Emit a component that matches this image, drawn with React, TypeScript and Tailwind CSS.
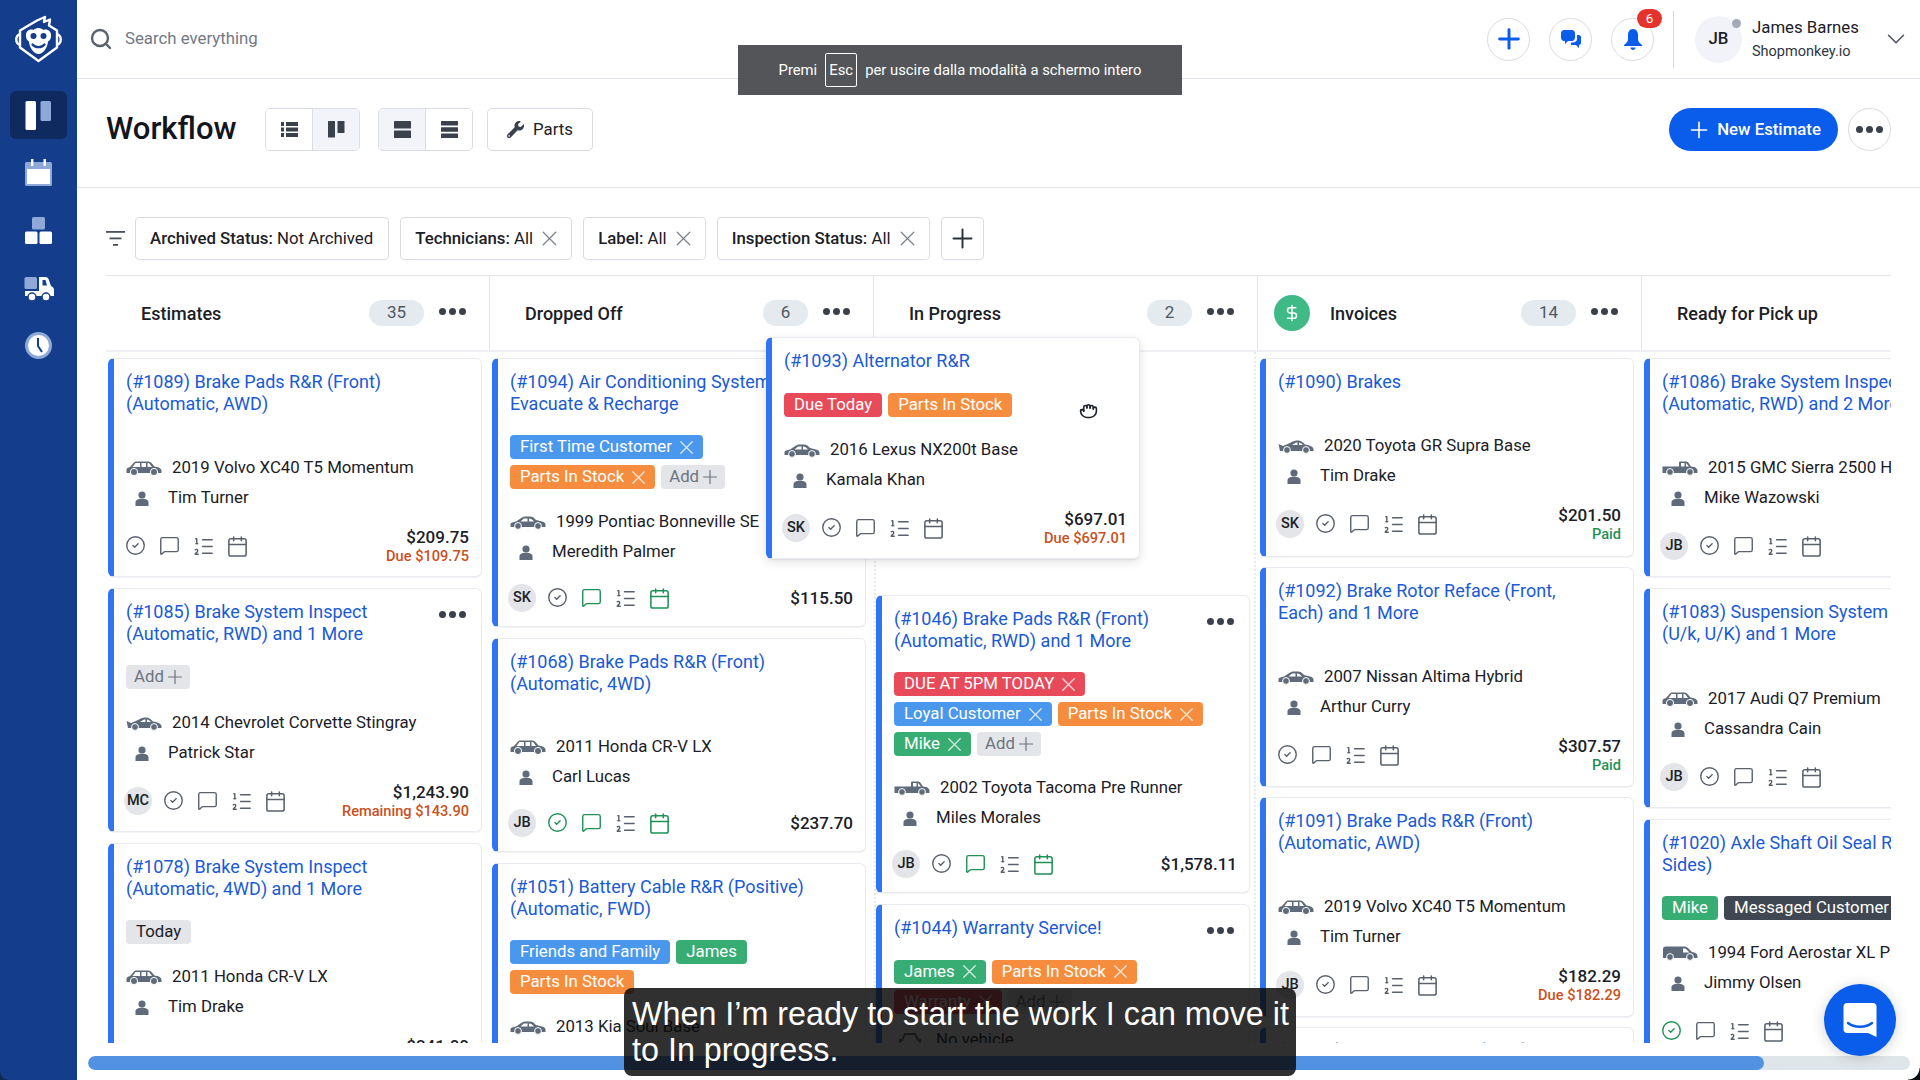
import React from "react";
import { Search, Plus, X, ChevronDown, CircleCheck, MessageSquare, ListOrdered, Calendar, Grab, DollarSign } from "lucide-react";
import { FaWrench } from "react-icons/fa";

const INK = "text-[#1b2027]";

function Logo() {
  return (
    <svg width="49" height="48" viewBox="0 0 49 48" fill="none">
      <path d="M23 5.5 L31 2 L30 7 L36 4.5 L35 10.5 L43 15.5 V32.5 L24.5 46 L6 32.5 V15.5 Z" stroke="#fff" strokeWidth="2.4" strokeLinejoin="round" />
      <path d="M24.5 13 C27 13 28.5 14 29.5 15 C33.5 13.5 37.5 16.5 37 21 C37 23.5 36 25.5 34 26.5 C33.5 33 29 39 24.5 39 C20 39 15.5 33 15 26.5 C13 25.5 12 23.5 12 21 C11.5 16.5 15.5 13.5 19.5 15 C20.5 14 22 13 24.5 13 Z" fill="#fff" />
      <path d="M6 19 C1 21 1 28 6 30 M43 19 C48 21 48 28 43 30" stroke="#fff" strokeWidth="2.4" />
      <circle cx="19.5" cy="21" r="3" fill="#143e8c" />
      <circle cx="29.5" cy="21" r="3" fill="#143e8c" />
      <path d="M18.5 29.5 C21 33 28 33 30.5 29.5" stroke="#143e8c" strokeWidth="2.2" strokeLinecap="round" />
    </svg>
  );
}

const L = "#8ea8d8";
function NavBoard() {
  return (
    <svg width="27" height="29" viewBox="0 0 27 29">
      <rect x="0.5" y="0" width="10.5" height="29" rx="1.5" fill="#fff" />
      <rect x="15.5" y="0" width="10.5" height="20" rx="1.5" fill={L} />
    </svg>
  );
}
function NavCal() {
  return (
    <svg width="27" height="27" viewBox="0 0 27 27">
      <rect x="0" y="3" width="27" height="24" rx="1.5" fill={L} />
      <rect x="2" y="10" width="23" height="15" fill="#fff" />
      <rect x="6" y="0" width="2.4" height="7" fill="#fff" />
      <rect x="18.5" y="0" width="2.4" height="7" fill="#fff" />
    </svg>
  );
}
function NavBlocks() {
  return (
    <svg width="27" height="27" viewBox="0 0 27 27">
      <rect x="7" y="0" width="13" height="12.5" rx="1.5" fill={L} />
      <rect x="0" y="14.5" width="12.5" height="12.5" rx="1.5" fill="#fff" />
      <rect x="14.5" y="14.5" width="12.5" height="12.5" rx="1.5" fill="#fff" />
    </svg>
  );
}
function NavTruck() {
  return (
    <svg width="30" height="25" viewBox="0 0 30 25" className="mt-[3px]">
      <rect x="0.5" y="0" width="12.5" height="12" rx="1.5" fill={L} />
      <path d="M15 0 H22 C23 0 24 1 24.5 2 L27 9 C29 10 30 11 30 13 V19 H1 V14 H15 Z" fill="#fff" />
      <path d="M18.5 3 H21.5 L23 8.5 H18.5 Z" fill="#143e8c" />
      <circle cx="8" cy="20" r="4" fill="#fff" stroke="#143e8c" strokeWidth="1.5" />
      <circle cx="22" cy="20" r="4" fill="#fff" stroke="#143e8c" strokeWidth="1.5" />
    </svg>
  );
}
function NavClock() {
  return (
    <svg width="27" height="27" viewBox="0 0 27 27">
      <circle cx="13.5" cy="13.5" r="13.5" fill={L} />
      <circle cx="13.5" cy="13.5" r="10.5" fill="#fff" />
      <path d="M13 6 V14 L17 20" stroke="#143e8c" strokeWidth="2" fill="none" />
    </svg>
  );
}

function Suv() {
  return (
    <svg width="36" height="15" viewBox="0 0 36 15" className="shrink-0">
      <path d="M0.5 9 C0.5 7 2 6.5 4 6 L8 1.5 C8.5 0.7 9.5 0.5 10.5 0.5 H22 C23.5 0.5 24.5 1 25.5 2 L28.5 5.5 C32 6 35.5 7 35.5 10 V12 H0.5 Z" fill="#5f6b7a" />
      <path d="M6.5 6 L9.5 2 H14 V6 Z M15.5 2 H20 V6 H15.5 Z M21.5 2 H23 L26 6 H21.5 Z" fill="#fff" />
      <circle cx="8" cy="11" r="3.6" fill="#5f6b7a" stroke="#fff" strokeWidth="1" />
      <circle cx="28" cy="11" r="3.6" fill="#5f6b7a" stroke="#fff" strokeWidth="1" />
    </svg>
  );
}
function Sedan() {
  return (
    <svg width="36" height="15" viewBox="0 0 36 15" className="shrink-0">
      <path d="M0.5 9 C1 7.5 3 7 6 6.5 L12 2.5 C13 2 14 1.5 16 1.5 H20 C22 1.5 24 2.5 26 5 L32 6.5 C34.5 7 35.5 8 35.5 10 V12 H0.5 Z" fill="#5f6b7a" />
      <path d="M10.5 6.5 L14 3.5 H17.5 V6.5 Z M19 3.5 C21 3.5 22.5 4.5 24 6.5 H19 Z" fill="#fff" />
      <circle cx="8" cy="11" r="3.4" fill="#5f6b7a" stroke="#fff" strokeWidth="1" />
      <circle cx="28" cy="11" r="3.4" fill="#5f6b7a" stroke="#fff" strokeWidth="1" />
    </svg>
  );
}
function Coupe() {
  return (
    <svg width="36" height="15" viewBox="0 0 36 15" className="shrink-0">
      <path d="M0.5 5 L5 7 L12 4 C15 2 18 1.5 20 1.5 C23 1.5 25 3.5 27 5.5 C31 6 35 7.5 35.5 10 V12 H2 Z" fill="#5f6b7a" />
      <path d="M14 6 L18 3.5 H19.5 V6 Z M21 3.5 C22.5 3.5 23.5 4.5 25 6 H21 Z" fill="#fff" />
      <circle cx="9" cy="11" r="3.4" fill="#5f6b7a" stroke="#fff" strokeWidth="1" />
      <circle cx="28" cy="11" r="3.4" fill="#5f6b7a" stroke="#fff" strokeWidth="1" />
    </svg>
  );
}
function Pickup() {
  return (
    <svg width="36" height="15" viewBox="0 0 36 15" className="shrink-0">
      <path d="M0.5 5.5 H17 V1.5 C17 1 17.5 0.5 18 0.5 H24 C25 0.5 26 1 27 2.5 L29 5.5 C33 6 35.5 7 35.5 10 V12 H0.5 Z" fill="#5f6b7a" />
      <path d="M19 2 H22.5 V5.5 H19 Z M24 2 L27 5.5 H24 Z" fill="#fff" />
      <circle cx="8" cy="11" r="3.4" fill="#5f6b7a" stroke="#fff" strokeWidth="1" />
      <circle cx="28" cy="11" r="3.4" fill="#5f6b7a" stroke="#fff" strokeWidth="1" />
    </svg>
  );
}
function Van() {
  return (
    <svg width="36" height="15" viewBox="0 0 36 15" className="shrink-0">
      <path d="M1 12 V3 C1 1.5 2 0.5 4 0.5 H22 C24 0.5 25 1 27 3 L30 6 C33 6.5 35.5 7.5 35.5 10 V12 Z" fill="#5f6b7a" />
      <path d="M21 2.5 H23.5 L27.5 6.5 H21 Z" fill="#fff" />
      <circle cx="8" cy="11" r="3.4" fill="#5f6b7a" stroke="#fff" strokeWidth="1" />
      <circle cx="28" cy="11" r="3.4" fill="#5f6b7a" stroke="#fff" strokeWidth="1" />
    </svg>
  );
}
function NoVehicle() {
  return (
    <svg width="32" height="15" viewBox="0 0 32 15" className="shrink-0">
      <path d="M11 1 H21 L24 7 H26 V14 H6 V7 H8 Z" fill="none" stroke="#5f6b7a" strokeWidth="2" />
    </svg>
  );
}
const cars: Record<string, () => React.ReactElement> = { suv: Suv, sedan: Sedan, coupe: Coupe, pickup: Pickup, van: Van, none: NoVehicle };

function Person() {
  return (
    <svg width="14" height="15" viewBox="0 0 14 15" className="shrink-0">
      <circle cx="7" cy="4" r="3.6" fill="#5f6b7a" />
      <path d="M0.5 15 V11.5 C0.5 9 3 7.8 7 7.8 C11 7.8 13.5 9 13.5 11.5 V15 Z" fill="#5f6b7a" />
    </svg>
  );
}

function Dots({ className = "" }: { className?: string }) {
  return (
    <div className={`flex items-center gap-[3px] shrink-0 ${className}`}>
      <span className="w-[7px] h-[7px] rounded-full bg-[#3a414c]" />
      <span className="w-[7px] h-[7px] rounded-full bg-[#3a414c]" />
      <span className="w-[7px] h-[7px] rounded-full bg-[#3a414c]" />
    </div>
  );
}

const tagColors: Record<string, string> = {
  blue: "bg-[#4a97ee] text-white",
  orange: "bg-[#f68d3e] text-white",
  red: "bg-[#e94a5a] text-white",
  green: "bg-[#37ad74] text-white",
  dark: "bg-[#3f4753] text-white",
  gray: "bg-[#e3e5e8] text-[#1b2027]",
};

function Tag({ label, color, x }: { label: string; color: string; x?: boolean }) {
  return (
    <span className={`h-[24px] rounded-[4px] px-[10px] flex items-center gap-[8px] text-[16.8px] whitespace-nowrap shrink-0 ${tagColors[color]}`}>
      {label}
      {x && <X size={23} strokeWidth={1.3} className="opacity-80 -mx-[5px]" />}
    </span>
  );
}
function AddTag() {
  return (
    <span className="h-[24px] rounded-[4px] px-[8px] flex items-center gap-[4px] text-[16.8px] whitespace-nowrap bg-[#e3e5e8] text-[#6d7480] shrink-0">
      Add <Plus size={22} strokeWidth={1.3} className="-mx-[4px]" />
    </span>
  );
}

type T = { label: string; color: string; x?: boolean } | "add";

type CardProps = {
  h: string;
  title: string;
  dots?: boolean;
  tags?: T[];
  car: string;
  vehicle: string;
  person: string;
  avatar?: string;
  green?: string;
  price?: string;
  sub?: string;
  subColor?: string;
  tall?: boolean;
  lift?: string;
};

function FooterIcon({ on, children }: { on?: boolean; children: React.ReactNode }) {
  return <span className={`w-[34px] flex justify-center shrink-0 ${on ? "text-[#1f9156]" : "text-[#59616d]"}`}>{children}</span>;
}

function Card({ h, title, dots, tags, car, vehicle, person, avatar, green = "", price, sub, subColor, tall, lift = "" }: CardProps) {
  const Car = cars[car];
  const two = tall || !!sub;
  return (
    <div className={`${h} shrink-0 w-[374px] bg-white border border-[#e8ebef] border-l-[6px] border-l-[#2f74f0] rounded-[6px] pl-[12px] pt-[12px] flex flex-col shadow-[0_1px_1px_rgba(0,0,0,0.05)]`}>
      <div className="flex justify-between pr-[15px]">
        <div className="text-[18px] leading-[21.5px] text-[#1a5ad6] whitespace-pre">{title}</div>
        {dots && <Dots className="self-start mt-[10px]" />}
      </div>
      {tags && (
        <div className="flex flex-wrap gap-x-[6px] gap-y-[6px] mt-[21px] pr-[15px]">
          {tags.map((t, i) => (t === "add" ? <AddTag key={i} /> : <Tag key={i} {...t} />))}
        </div>
      )}
      <div className={`mt-auto ${lift}`}>
        <div className={`h-[30px] flex items-center gap-[10px] text-[16.8px] whitespace-nowrap ${INK}`}>
          <Car />
          {vehicle}
        </div>
        <div className={`h-[30px] flex items-center gap-[19px] pl-[9px] text-[16.8px] whitespace-nowrap ${INK}`}>
          <Person />
          {person}
        </div>
        <div className={`flex items-center pr-[12px] ${two ? "h-[38px] mt-[14px] mb-[11px]" : "h-[28px] mt-[17px] mb-[14px]"}`}>
          {avatar && (
            <span className={`w-[28px] h-[28px] rounded-full bg-[#e3e5e9] flex items-center justify-center text-[14.5px] font-medium -ml-[2px] mr-[4px] shrink-0 ${INK}`}>{avatar}</span>
          )}
          <div className={`flex ${avatar ? "" : "-ml-[8px]"}`}>
            <FooterIcon on={green.includes("c")}><CircleCheck size={21} strokeWidth={1.6} /></FooterIcon>
            <FooterIcon on={green.includes("m")}><MessageSquare size={21} strokeWidth={1.6} /></FooterIcon>
            <FooterIcon><ListOrdered size={23} strokeWidth={1.5} /></FooterIcon>
            <FooterIcon on={green.includes("d")}><Calendar size={23} strokeWidth={1.6} /></FooterIcon>
          </div>
          <div className="ml-auto text-right">
            {price && <div className={`text-[17px] leading-[20px] font-medium ${INK}`}>{price}</div>}
            {sub && <div className={`text-[14.6px] leading-[18px] font-medium ${subColor}`}>{sub}</div>}
          </div>
        </div>
      </div>
    </div>
  );
}

const RED = "text-[#c9511d]";
const GRN = "text-[#1f9156]";

function ColHead({ name, count, dollar, last }: { name: string; count?: string; dollar?: boolean; last?: boolean }) {
  return (
    <div className={`w-[384px] shrink-0 flex items-center pr-[23px] ${last ? "" : "border-r border-[#e4e7eb]"} ${dollar ? "pl-[16px]" : "pl-[35px]"}`}>
      {dollar && (
        <span className="w-[36px] h-[36px] rounded-full bg-[#3fb985] flex items-center justify-center mr-[20px]">
          <DollarSign size={18} strokeWidth={2} className="text-white" />
        </span>
      )}
      <span className={`text-[18px] font-medium ${INK}`}>{name}</span>
      {count && (
        <>
          <span className={`ml-auto h-[26px] rounded-full bg-[#e4eaed] text-[#4e5865] text-[17px] flex items-center justify-center ${count.length > 1 ? "w-[55px]" : "w-[45px]"}`}>{count}</span>
          <Dots className="ml-[15px] -mt-[3px]" />
        </>
      )}
    </div>
  );
}

function Chip({ label, value, x = true }: { label: string; value: string; x?: boolean }) {
  return (
    <div className={`h-[43px] rounded-[4px] border border-[#d9dde3] bg-white flex items-center pl-[14px] pr-[15px] text-[16.8px] whitespace-nowrap ${INK}`}>
      <span className="font-medium">{label}:</span>&nbsp;{value}
      {x && <X size={25} strokeWidth={1.2} className="ml-[4px] -mr-[6px] text-[#7b828c]" />}
    </div>
  );
}

function ListV() {
  return (
    <svg width="17" height="17" viewBox="0 0 17 17" fill="#3a414c">
      <rect x="0" y="1" width="3" height="4" /><rect x="0" y="6.5" width="3" height="4" /><rect x="0" y="12" width="3" height="4" />
      <rect x="5" y="1" width="12" height="4" /><rect x="5" y="6.5" width="12" height="4" /><rect x="5" y="12" width="12" height="4" />
    </svg>
  );
}
function KanbanV() {
  return (
    <svg width="17" height="17" viewBox="0 0 17 17" fill="#3a414c">
      <rect x="0" y="0" width="7" height="16.5" rx="0.5" /><rect x="9.5" y="0" width="7" height="12" rx="0.5" />
    </svg>
  );
}
function Rows2() {
  return (
    <svg width="17" height="17" viewBox="0 0 17 17" fill="#3a414c">
      <rect x="0" y="0" width="17" height="7.5" rx="0.5" /><rect x="0" y="9.5" width="17" height="7.5" rx="0.5" />
    </svg>
  );
}
function Rows3() {
  return (
    <svg width="17" height="17" viewBox="0 0 17 17" fill="#3a414c">
      <rect x="0" y="0" width="17" height="4.6" rx="0.5" /><rect x="0" y="6.2" width="17" height="4.6" rx="0.5" /><rect x="0" y="12.4" width="17" height="4.6" rx="0.5" />
    </svg>
  );
}

function Segmented({ first, second, active }: { first: React.ReactNode; second: React.ReactNode; active: 0 | 1 }) {
  return (
    <div className="h-[43px] flex rounded-[5px] border border-[#d9dde3] overflow-hidden">
      <div className={`w-[47px] flex items-center justify-center border-r border-[#d9dde3] ${active === 0 ? "bg-[#f3f4f9]" : "bg-white"}`}>{first}</div>
      <div className={`w-[46px] flex items-center justify-center ${active === 1 ? "bg-[#f3f4f9]" : "bg-white"}`}>{second}</div>
    </div>
  );
}

function RoundBtn({ children }: { children: React.ReactNode }) {
  return <div className="relative w-[43px] h-[43px] rounded-full border border-[#d9dbdf] bg-white flex items-center justify-center shrink-0">{children}</div>;
}

export default function App() {
  return (
    <div className="relative w-[1920px] h-[1080px] overflow-hidden flex bg-white [font-family:Roboto,sans-serif]">
      {/* sidebar */}
      <aside className="w-[77px] shrink-0 bg-[#143e8c] flex flex-col items-center pt-[15px]">
        <Logo />
        <nav className="mt-[28px] flex flex-col gap-[9.5px]">
          <div className="w-[57px] h-[48px] rounded-[6px] bg-[#0e2a5e] flex items-center justify-center"><NavBoard /></div>
          <div className="w-[57px] h-[48px] flex items-center justify-center"><NavCal /></div>
          <div className="w-[57px] h-[48px] flex items-center justify-center"><NavBlocks /></div>
          <div className="w-[57px] h-[48px] flex items-center justify-center"><NavTruck /></div>
          <div className="w-[57px] h-[48px] flex items-center justify-center"><NavClock /></div>
        </nav>
      </aside>

      <main className="flex-1 min-w-0 flex flex-col">
        {/* top bar */}
        <header className="h-[79px] shrink-0 border-b border-[#e2e5e9] flex items-center pl-[12px] pr-[9px]">
          <Search size={24} strokeWidth={2.4} className="text-[#59616d]" />
          <span className="ml-[12px] text-[16.8px] text-[#727985]">Search everything</span>
          <div className="ml-auto flex items-center">
            <RoundBtn><Plus size={32} strokeWidth={2.2} className="text-[#0a5ceb]" /></RoundBtn>
            <div className="ml-[19px]">
              <RoundBtn>
                <svg width="20" height="20" viewBox="0 0 20 20" fill="#0a5ceb">
                  <path d="M3 1 H11 C12.5 1 14 2.5 14 4 V9 C14 10.5 12.5 12 11 12 H7 L4 15 V12 H3 C1.5 12 0 10.5 0 9 V4 C0 2.5 1.5 1 3 1 Z" />
                  <path d="M16 6 H18 C19 6 20 7 20 8 V14 C20 15 19 16 18 16 V19 L15 16 H10 V13.5 H12 C14 13.5 16 12 16 10 Z" />
                </svg>
              </RoundBtn>
            </div>
            <div className="ml-[19px]">
              <RoundBtn>
                <svg width="20" height="22" viewBox="0 0 20 22" fill="#0a5ceb">
                  <path d="M10 1 C13.5 1 15 4 15 7 V11 C15 14 17 15 19 17 V18 H1 V17 C3 15 5 14 5 11 V7 C5 4 6.5 1 10 1 Z" />
                  <path d="M7.5 19.5 H12.5 C12.5 21 11.5 22 10 22 C8.5 22 7.5 21 7.5 19.5 Z" />
                </svg>
                <span className="absolute -top-[10px] -right-[9px] w-[25px] h-[19px] rounded-full bg-[#e5322c] text-white text-[13.5px] flex items-center justify-center">6</span>
              </RoundBtn>
            </div>
            <div className="w-px h-[57px] bg-[#d5d8dc] ml-[19px]" />
            <div className="relative w-[47px] h-[47px] rounded-full bg-[#f1f3f8] flex items-center justify-center ml-[21px] text-[16.8px] font-medium text-[#1b2027]">
              JB
              <span className="absolute top-[3px] right-[1px] w-[9px] h-[9px] rounded-full bg-[#a4aab3]" />
            </div>
            <div className="ml-[10px] w-[129px]">
              <div className={`text-[16.8px] leading-[20px] ${INK}`}>James Barnes</div>
              <div className="text-[14.5px] leading-[20px] mt-[5px] text-[#2f3640]">Shopmonkey.io</div>
            </div>
            <ChevronDown size={30} strokeWidth={1.2} className="text-[#4a515c]" />
          </div>
        </header>

        {/* title bar */}
        <section className="h-[109px] shrink-0 border-b border-[#e2e5e9] flex items-center pl-[29px] pr-[29px] pb-[7px]">
          <h1 className="text-[31px] font-medium text-[#12161c] w-[159px]">Workflow</h1>
          <Segmented first={<ListV />} second={<KanbanV />} active={1} />
          <div className="ml-[18px]"><Segmented first={<Rows2 />} second={<Rows3 />} active={0} /></div>
          <div className={`ml-[14px] h-[43px] w-[106px] rounded-[5px] border border-[#d9dde3] flex items-center justify-center gap-[9px] text-[16.8px] ${INK}`}>
            <FaWrench size={17} className="text-[#3a414c]" />
            Parts
          </div>
          <div className="ml-auto h-[43px] w-[169px] rounded-full bg-[#0a5ceb] text-white text-[16.8px] font-medium flex items-center justify-center gap-[5px]">
            <Plus size={26} strokeWidth={1.5} /> New Estimate
          </div>
          <div className="ml-[10px]"><RoundBtn><Dots /></RoundBtn></div>
        </section>

        {/* filters */}
        <div className="h-[43px] mt-[29px] shrink-0 flex items-center pl-[29px] gap-[11px]">
          <svg width="19" height="17" viewBox="0 0 19 17" fill="#4a515c" className="-mr-[1px]">
            <rect x="0" y="1" width="19" height="1.8" /><rect x="3.5" y="7.5" width="12" height="1.8" /><rect x="7" y="14" width="5" height="1.8" />
          </svg>
          <Chip label="Archived Status" value="Not Archived" x={false} />
          <Chip label="Technicians" value="All" />
          <Chip label="Label" value="All" />
          <Chip label="Inspection Status" value="All" />
          <div className="h-[43px] w-[43px] rounded-[4px] border border-[#d9dde3] flex items-center justify-center">
            <Plus size={31} strokeWidth={1.5} className="text-[#2b313a]" />
          </div>
        </div>

        {/* board */}
        <div className="mt-[15px] ml-[29px] mr-[29px] h-[768px] overflow-hidden flex flex-col shrink-0">
          <div className="h-[77px] shrink-0 flex border-t border-[#e2e5e9] border-b-2 border-b-[#eef0f3]">
            <ColHead name="Estimates" count="35" />
            <ColHead name="Dropped Off" count="6" />
            <ColHead name="In Progress" count="2" />
            <ColHead name="Invoices" count="14" dollar />
            <ColHead name="Ready for Pick up" last />
          </div>
          <div className="flex">
            <div className="w-[384px] shrink-0 pl-[2px] pt-[6px] flex flex-col gap-[11px]">
              <Card h="h-[219px]" title={"(#1089) Brake Pads R&R (Front)\n(Automatic, AWD)"} car="suv" vehicle="2019 Volvo XC40 T5 Momentum" person="Tim Turner" price="$209.75" sub="Due $109.75" subColor={RED} />
              <Card h="h-[244px]" title={"(#1085) Brake System Inspect\n(Automatic, RWD) and 1 More"} dots tags={["add"]} car="coupe" vehicle="2014 Chevrolet Corvette Stingray" person="Patrick Star" avatar="MC" price="$1,243.90" sub="Remaining $143.90" subColor={RED} />
              <Card h="h-[243px]" title={"(#1078) Brake System Inspect\n(Automatic, 4WD) and 1 More"} tags={[{ label: "Today", color: "gray" }]} car="suv" vehicle="2011 Honda CR-V LX" person="Tim Drake" price="$241.00" sub="Due $241.00" subColor={RED} />
            </div>
            <div className="w-[384px] shrink-0 pl-[2px] pt-[6px] flex flex-col gap-[11px]">
              <Card h="h-[269px]" title={"(#1094) Air Conditioning System -\nEvacuate & Recharge"} tags={[{ label: "First Time Customer", color: "blue", x: true }, { label: "Parts In Stock", color: "orange", x: true }, "add"]} car="sedan" vehicle="1999 Pontiac Bonneville SE" person="Meredith Palmer" avatar="SK" green="md" price="$115.50" />
              <Card h="h-[214px]" title={"(#1068) Brake Pads R&R (Front)\n(Automatic, 4WD)"} car="suv" vehicle="2011 Honda CR-V LX" person="Carl Lucas" avatar="JB" green="cmd" price="$237.70" />
              <Card h="h-[269px]" title={"(#1051) Battery Cable R&R (Positive)\n(Automatic, FWD)"} tags={[{ label: "Friends and Family", color: "blue" }, { label: "James", color: "green" }, { label: "Parts In Stock", color: "orange" }]} car="sedan" vehicle="2013 Kia Soul Base" person="Carl Lucas" />
            </div>
            <div className="w-[382px] mr-[2px] shrink-0 border-x-2 border-dotted border-[#e6e9ed] pt-[243px] flex flex-col gap-[11px]">
              <Card h="h-[298px]" title={"(#1046) Brake Pads R&R (Front)\n(Automatic, RWD) and 1 More"} dots tags={[{ label: "DUE AT 5PM TODAY", color: "red", x: true }, { label: "Loyal Customer", color: "blue", x: true }, { label: "Parts In Stock", color: "orange", x: true }, { label: "Mike", color: "green", x: true }, "add"]} car="pickup" vehicle="2002 Toyota Tacoma Pre Runner" person="Miles Morales" avatar="JB" green="md" price="$1,578.11" />
              <Card h="h-[241px]" title="(#1044) Warranty Service!" dots tags={[{ label: "James", color: "green", x: true }, { label: "Parts In Stock", color: "orange", x: true }, { label: "Warranty", color: "red", x: true }, "add"]} car="none" vehicle="No vehicle" person="No customer" />
            </div>
            <div className="w-[384px] shrink-0 pl-[2px] pt-[6px] flex flex-col gap-[10px]">
              <Card h="h-[199px]" lift="mb-[2px]" title="(#1090) Brakes" car="coupe" vehicle="2020 Toyota GR Supra Base" person="Tim Drake" avatar="SK" price="$201.50" sub="Paid" subColor={GRN} />
              <Card h="h-[220px]" lift="mb-[1px]" title={"(#1092) Brake Rotor Reface (Front,\nEach) and 1 More"} car="sedan" vehicle="2007 Nissan Altima Hybrid" person="Arthur Curry" price="$307.57" sub="Paid" subColor={GRN} />
              <Card h="h-[220px]" lift="mb-[1px]" title={"(#1091) Brake Pads R&R (Front)\n(Automatic, AWD)"} car="suv" vehicle="2019 Volvo XC40 T5 Momentum" person="Tim Turner" avatar="JB" price="$182.29" sub="Due $182.29" subColor={RED} />
              <Card h="h-[220px]" title={"(#1087) Brake Pads R&R (Rear)\n(Automatic, AWD)"} car="suv" vehicle="2018 Honda Civic LX" person="Tim Drake" />
            </div>
            <div className="w-[384px] shrink-0 pl-[2px] pt-[6px] flex flex-col gap-[11px]">
              <Card h="h-[219px]" title={"(#1086) Brake System Inspect\n(Automatic, RWD) and 2 More"} car="pickup" vehicle="2015 GMC Sierra 2500 HD" person="Mike Wazowski" avatar="JB" tall />
              <Card h="h-[220px]" title={"(#1083) Suspension System\n(U/k, U/K) and 1 More"} car="suv" vehicle="2017 Audi Q7 Premium" person="Cassandra Cain" avatar="JB" tall />
              <Card h="h-[243px]" title={"(#1020) Axle Shaft Oil Seal R&R (Both\nSides)"} tags={[{ label: "Mike", color: "green" }, { label: "Messaged Customer", color: "dark" }]} car="van" vehicle="1994 Ford Aerostar XL Plus" person="Jimmy Olsen" green="c" tall />
            </div>
          </div>
        </div>

        {/* scrollbar */}
        <div className="mt-[13px] ml-[11px] mr-[10px] h-[14px] rounded-full bg-[#dfe6ea] overflow-hidden shrink-0">
          <div className="h-full w-[1676px] rounded-full bg-[#5392e3]" />
        </div>
      </main>

      {/* dragged card */}
      <div className="absolute left-[766px] top-[337px] shadow-[0_3px_10px_rgba(0,0,0,0.12)] rounded-[6px]">
        <Card h="h-[222px]" title="(#1093) Alternator R&R" tags={[{ label: "Due Today", color: "red" }, { label: "Parts In Stock", color: "orange" }]} car="sedan" vehicle="2016 Lexus NX200t Base" person="Kamala Khan" avatar="SK" price="$697.01" sub="Due $697.01" subColor={RED} />
      </div>
      <Grab size={19} strokeWidth={2} className="absolute left-[1079px] top-[400px] text-[#1b2027]" />

      {/* fullscreen hint */}
      <div className="absolute left-[738px] top-[45px] w-[444px] h-[50px] bg-[rgba(68,71,75,0.92)] text-white text-[14.8px] flex items-center justify-center gap-[8px]">
        Premi
        <span className="w-[32px] h-[34px] border border-white rounded-[2px] flex items-center justify-center">Esc</span>
        per uscire dalla modalità a schermo intero
      </div>

      {/* chat launcher */}
      <div className="absolute left-[1824px] top-[984px] w-[72px] h-[72px] rounded-full bg-[#0a5ceb] shadow-[0_2px_14px_rgba(0,0,0,0.18)] flex items-center justify-center">
        <svg width="34" height="36" viewBox="0 0 34 36">
          <path d="M4 1 H30 C32 1 33.5 2.5 33.5 4 V35 L25 31 H4 C2 31 0.5 29.5 0.5 28 V4 C0.5 2.5 2 1 4 1 Z" fill="#fff" />
          <path d="M5 21 C11 26 23 26 29 21" stroke="#0a5ceb" strokeWidth="2.4" fill="none" strokeLinecap="round" />
        </svg>
      </div>

      {/* caption */}
      <div className="absolute left-[624px] top-[988px] w-[672px] h-[88px] rounded-[8px] bg-[rgba(8,8,8,0.84)] text-white text-[32.3px] leading-[36px] px-[8px] py-[8px] whitespace-nowrap [font-family:'Liberation_Sans',sans-serif]">
        When I’m ready to start the work I can move it
        <br />
        to In progress.
      </div>

      {/* video frame corners */}
      <div className="absolute right-0 bottom-0 w-[12px] h-[12px] bg-[radial-gradient(circle_at_0_0,transparent_11px,#0d1012_12px)]" />
      <div className="absolute left-0 bottom-0 w-[8px] h-[8px] bg-[radial-gradient(circle_at_100%_0,transparent_7px,#0f2b55_8px)]" />
    </div>
  );
}
